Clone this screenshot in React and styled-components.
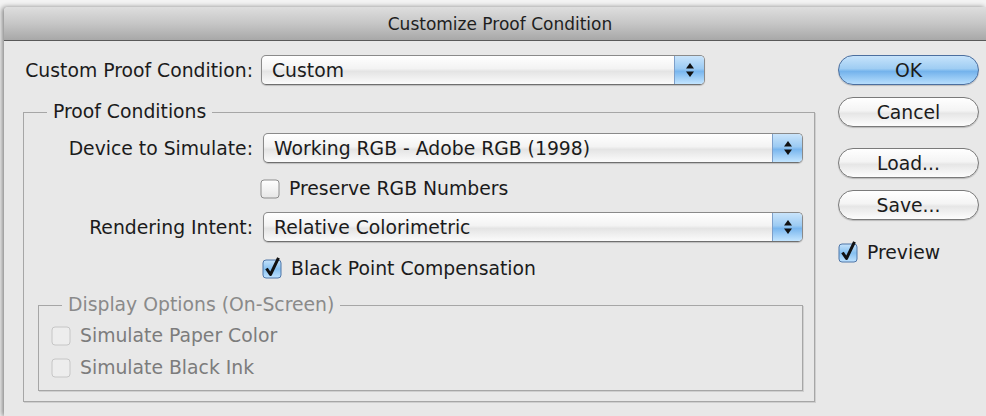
import React from "react";
import styled, { createGlobalStyle } from "styled-components";

const GlobalStyle = createGlobalStyle`
  html, body {
    margin: 0;
    padding: 0;
    background: #f3f3f3;
  }
  body {
    font-family: "DejaVu Sans", Verdana, sans-serif;
    color: #1b1b1b;
  }
  * {
    box-sizing: border-box;
  }
`;

const Screen = styled.div`
  width: 986px;
  height: 416px;
  padding-top: 7px;
  overflow: hidden;
  background: #f3f3f3;
`;

const Window = styled.div`
  height: 100%;
  margin-left: 4px;
  display: flex;
  flex-direction: column;
  background: #e8e8e8;
  border-top-left-radius: 4px;
  box-shadow: -2px 0 5px rgba(0, 0, 0, 0.45);
`;

const TitleBar = styled.div`
  flex: none;
  height: 34px;
  display: flex;
  align-items: center;
  justify-content: center;
  padding-left: 10px;
  font-size: 17px;
  color: #1e1e1e;
  background: linear-gradient(#dedede, #c6c6c6 50%, #a8a8a8);
  border-top-left-radius: 4px;
  border-bottom: 1px solid #595959;
`;

const Body = styled.div`
  flex: 1;
  display: flex;
  gap: 23px;
  padding: 14px 7px 0 19px;
`;

const LeftColumn = styled.div`
  width: 792px;
  display: flex;
  flex-direction: column;
`;

const RightColumn = styled.div`
  width: 141px;
  display: flex;
  flex-direction: column;
`;

const Row = styled.div`
  display: flex;
  align-items: center;
  margin-top: ${({ $top }) => $top || 0}px;
  padding-left: ${({ $indent }) => $indent || 0}px;
`;

const Label = styled.div`
  width: ${({ $width }) => $width}px;
  margin-right: ${({ $gap }) => $gap}px;
  text-align: right;
  font-size: 18.8px;
  white-space: nowrap;
`;

const Popup = styled.div`
  width: ${({ $width }) => $width}px;
  height: 30px;
  display: flex;
  border: 1px solid #8a8a8a;
  border-bottom-color: #6f6f6f;
  border-radius: 5px;
  overflow: hidden;
  background: linear-gradient(#ffffff, #f3f3f3 45%, #e4e4e4 55%, #fbfbfb);
  box-shadow: 0 1px 1px rgba(0, 0, 0, 0.18);
`;

const PopupText = styled.div`
  flex: 1;
  display: flex;
  align-items: center;
  padding-left: 10px;
  font-size: 18.8px;
  white-space: nowrap;
`;

const Stepper = styled.div`
  width: 30px;
  display: flex;
  align-items: center;
  justify-content: center;
  border-left: 1px solid #7d9fc9;
  background: linear-gradient(#c9e4fb, #9ccbf3 45%, #79b6ee 55%, #c3e5ff);
`;

const Fieldset = styled.fieldset`
  margin: ${({ $margin }) => $margin};
  padding: 0;
  min-width: 0;
  border: 1px solid #a6a6a6;
  box-shadow: 1px 1px 0 #cfcfcf;
`;

const Legend = styled.legend`
  margin-left: ${({ $indent }) => $indent}px;
  padding: 0 6px;
  font-size: 18.8px;
  line-height: 22px;
  color: ${({ $muted }) => ($muted ? "#8a8a8a" : "#1b1b1b")};
`;

const Group = styled.div`
  display: flex;
  flex-direction: column;
  padding: ${({ $pad }) => $pad};
`;

const CheckText = styled.span`
  margin-left: 9px;
  font-size: 18.8px;
  color: ${({ $muted }) => ($muted ? "#7c7c7c" : "#1b1b1b")};
  white-space: nowrap;
`;

const PillButton = styled.button`
  width: 141px;
  height: 30px;
  margin-top: ${({ $top }) => $top || 0}px;
  padding: 0;
  font-family: inherit;
  font-size: 18.8px;
  color: #1b1b1b;
  border-radius: 15px;
  border: 1px solid ${({ $primary }) => ($primary ? "#4c6f9f" : "#7a7a7a")};
  background: ${({ $primary }) =>
    $primary
      ? "linear-gradient(#c6e3fb, #9fcdf3 45%, #74b3ec 55%, #b7defd)"
      : "linear-gradient(#ffffff, #f4f4f4 45%, #e6e6e6 55%, #fdfdfd)"};
  box-shadow: 0 1px 1px rgba(0, 0, 0, 0.2);
`;

const Arrows = () => (
  <svg width="10" height="18" viewBox="0 0 10 18">
    <path d="M5 2 L9 7.5 L1 7.5 Z" fill="#111" />
    <path d="M5 16 L9 10.5 L1 10.5 Z" fill="#111" />
  </svg>
);

const Select = ({ width, value }) => (
  <Popup $width={width}>
    <PopupText>{value}</PopupText>
    <Stepper>
      <Arrows />
    </Stepper>
  </Popup>
);

const CheckBox = ({ checked, disabled }) => (
  <svg width="20" height="22" viewBox="0 0 20 22">
    <defs>
      <linearGradient id="boxPlain" x1="0" y1="0" x2="0" y2="1">
        <stop offset="0" stopColor="#ffffff" />
        <stop offset="1" stopColor="#e6e6e6" />
      </linearGradient>
      <linearGradient id="boxBlue" x1="0" y1="0" x2="0" y2="1">
        <stop offset="0" stopColor="#c6e3fb" />
        <stop offset="0.5" stopColor="#86c0f0" />
        <stop offset="1" stopColor="#bfe2ff" />
      </linearGradient>
    </defs>
    <rect
      x="1"
      y="3"
      width="18"
      height="18"
      rx="3"
      fill={disabled ? "#ededed" : checked ? "url(#boxBlue)" : "url(#boxPlain)"}
      stroke={disabled ? "#c6c6c6" : checked ? "#4f76a8" : "#8c8c8c"}
    />
    {checked && (
      <path
        d="M4.5 11.5 L8.5 17.5 L16.5 0.8"
        fill="none"
        stroke="#111"
        strokeWidth="3"
        strokeLinejoin="round"
      />
    )}
  </svg>
);

const Check = ({ label, checked, disabled, top, indent }) => (
  <Row $top={top} $indent={indent}>
    <CheckBox checked={checked} disabled={disabled} />
    <CheckText $muted={disabled}>{label}</CheckText>
  </Row>
);

export default function App() {
  return (
    <>
      <GlobalStyle />
      <Screen>
        <Window>
          <TitleBar>Customize Proof Condition</TitleBar>
          <Body>
            <LeftColumn>
              <Row>
                <Label $width={230} $gap={8}>
                  Custom Proof Condition:
                </Label>
                <Select width={444} value="Custom" />
              </Row>

              <Fieldset $margin="16px 0 0 0">
                <Legend $indent={23}>Proof Conditions</Legend>
                <Group $pad="10px 11px 10px 0">
                  <Row>
                    <Label $width={229} $gap={10}>
                      Device to Simulate:
                    </Label>
                    <Select width={540} value="Working RGB - Adobe RGB (1998)" />
                  </Row>
                  <Check label="Preserve RGB Numbers" top={14} indent={236} />
                  <Row $top={13}>
                    <Label $width={229} $gap={10}>
                      Rendering Intent:
                    </Label>
                    <Select width={540} value="Relative Colorimetric" />
                  </Row>
                  <Check label="Black Point Compensation" checked top={15} indent={238} />

                  <Fieldset $margin="15px 0 0 14px">
                    <Legend $indent={23} $muted>
                      Display Options (On-Screen)
                    </Legend>
                    <Group $pad="8px 0 12px 12px">
                      <Check label="Simulate Paper Color" disabled />
                      <Check label="Simulate Black Ink" disabled top={10} />
                    </Group>
                  </Fieldset>
                </Group>
              </Fieldset>
            </LeftColumn>

            <RightColumn>
              <PillButton $primary>OK</PillButton>
              <PillButton $top={12}>Cancel</PillButton>
              <PillButton $top={21}>Load...</PillButton>
              <PillButton $top={12}>Save...</PillButton>
              <Check label="Preview" checked top={21} />
            </RightColumn>
          </Body>
        </Window>
      </Screen>
    </>
  );
}
